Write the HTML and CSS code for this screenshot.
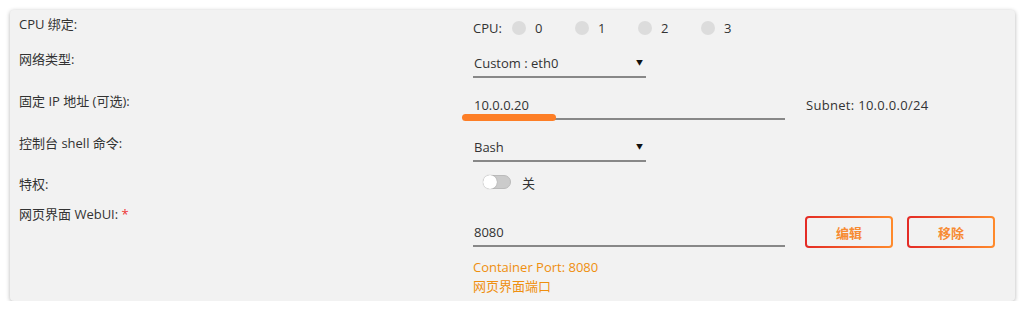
FILE: index.html
```html
<!DOCTYPE html>
<html lang="zh-CN">
<head>
    <meta charset="UTF-8">
    <title>容器设置</title>
    <link rel="stylesheet" href="styles.css">
</head>
<body>
    <div class="panel">
        <div class="row row-cpu">
            <div class="label">CPU 绑定:</div>
            <div class="field cpu-list">
                <span class="cpu-title">CPU:</span>
                <span class="cpu-opt"><i class="radio"></i>0</span>
                <span class="cpu-opt"><i class="radio"></i>1</span>
                <span class="cpu-opt"><i class="radio"></i>2</span>
                <span class="cpu-opt"><i class="radio"></i>3</span>
            </div>
        </div>

        <div class="row">
            <div class="label">网络类型:</div>
            <div class="field">
                <div class="select">Custom : eth0<span class="arrow">▼</span></div>
            </div>
        </div>

        <div class="row">
            <div class="label">固定 IP 地址 (可选):</div>
            <div class="field">
                <div class="input focused">10.0.0.20<span class="focus-bar"></span></div>
            </div>
            <div class="extra subnet">Subnet: 10.0.0.0/24</div>
        </div>

        <div class="row">
            <div class="label">控制台 shell 命令:</div>
            <div class="field">
                <div class="select">Bash<span class="arrow">▼</span></div>
            </div>
        </div>

        <div class="row row-priv">
            <div class="label">特权:</div>
            <div class="field toggle-wrap">
                <span class="toggle"><i class="knob"></i></span>
                <span>关</span>
            </div>
        </div>

        <div class="row row-webui">
            <div class="label">网页界面 WebUI: <span class="req">*</span></div>
            <div class="field">
                <div class="input">8080</div>
                <div class="hint">Container Port: 8080<br>网页界面端口</div>
            </div>
            <div class="extra actions">
                <button class="btn">编辑</button>
                <button class="btn">移除</button>
            </div>
        </div>
    </div>
</body>
</html>
```

FILE: styles.css
```css
body {
    margin: 0;
    padding: 10px 9px 0 10px;
    background: #fff;
    font-family: "Open Sans", "Noto Sans CJK SC", sans-serif;
    font-size: 13px;
    color: #333;
}
.panel {
    background: #f2f2f2;
    border-radius: 4px;
    box-shadow: 0 1px 4px rgba(0, 0, 0, 0.3);
    padding: 4px 0 5px 9px;
}
.row {
    display: grid;
    grid-template-columns: 454px 332px auto;
    height: 42px;
}
.label {
    line-height: 20px;
    padding-top: 7px;
}
.field {
    padding-top: 8px;
}
.row-cpu {
    height: 28px;
}
.row-cpu .label,
.row-cpu .field {
    padding-top: 0;
}
.cpu-list {
    display: flex;
    align-items: center;
    line-height: 20px;
}
.cpu-title {
    width: 39px;
}
.cpu-opt {
    display: flex;
    align-items: center;
    width: 63px;
}
.radio {
    width: 14px;
    height: 14px;
    border-radius: 50%;
    background: #dcdcdc;
    margin-right: 9px;
}
.select,
.input {
    position: relative;
    box-sizing: border-box;
    height: 28px;
    line-height: 26px;
    padding-left: 1px;
    border-bottom: 2px solid #888;
}
.select {
    width: 173px;
}
.input {
    width: 312px;
}
.arrow {
    position: absolute;
    right: 3px;
    top: 0;
    font-size: 7px;
    color: #111;
}
.focus-bar {
    position: absolute;
    left: -11px;
    bottom: -3px;
    width: 94px;
    height: 7px;
    border-radius: 4px;
    background: #fd7e26;
}
.subnet {
    line-height: 20px;
    padding: 11px 0 0 1px;
    letter-spacing: 0.3px;
}
.row-priv {
    height: 32px;
}
.row-priv .label {
    padding-top: 6px;
}
.toggle-wrap {
    display: flex;
    align-items: center;
    gap: 11px;
    padding: 6px 0 0 10px;
    height: 16px;
}
.toggle {
    box-sizing: border-box;
    width: 28px;
    height: 14px;
    border-radius: 7px;
    background: #cbcbcb;
    border: 1px solid #bbb;
    position: relative;
}
.knob {
    position: absolute;
    left: -1px;
    top: -1px;
    width: 14px;
    height: 14px;
    border-radius: 50%;
    background: #fff;
    box-shadow: 0 0 1px rgba(0, 0, 0, 0.4);
}
.row-webui {
    height: auto;
}
.row-webui .label {
    padding-top: 4px;
}
.row-webui .field {
    padding-top: 19px;
}
.req {
    color: #e33;
}
.hint {
    margin-top: 11px;
    line-height: 19px;
    color: #ef8f0f;
}
.actions {
    display: flex;
    gap: 14px;
    padding-top: 16px;
    align-items: flex-start;
}
.btn {
    width: 88px;
    height: 32px;
    border: 2px solid transparent;
    border-radius: 4px;
    background: linear-gradient(#f2f2f2, #f2f2f2) padding-box,
                linear-gradient(to right, #e42a25, #ff8b2c) border-box;
    color: #f78b33;
    font-family: "Noto Sans CJK SC", sans-serif;
    font-size: 13px;
    font-weight: bold;
    cursor: pointer;
}
```
